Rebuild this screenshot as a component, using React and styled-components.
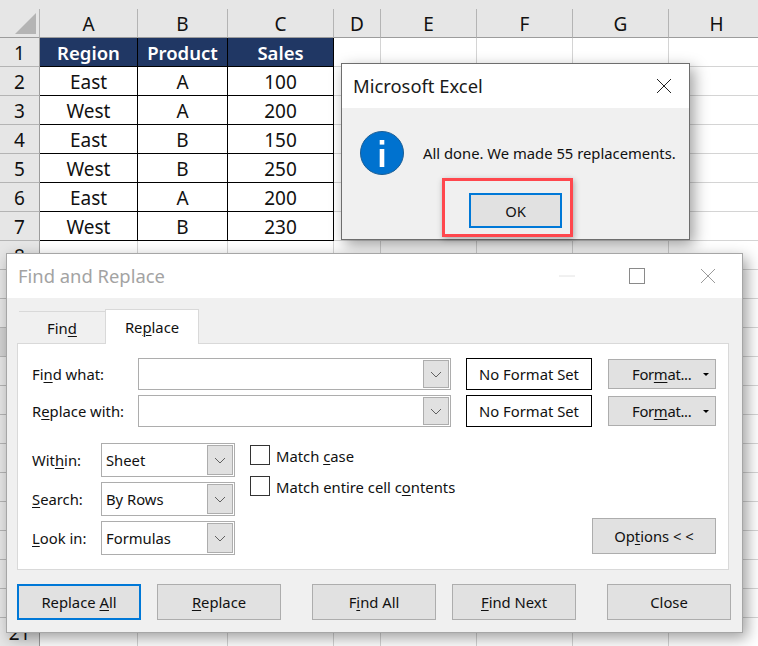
import React from 'react';
import styled, { createGlobalStyle } from 'styled-components';

const Global = createGlobalStyle`
  * { box-sizing: border-box; }
  html, body { margin: 0; padding: 0; background: #fff; }
  body { width: 758px; height: 646px; overflow: hidden; font-family: "Noto Sans", "Open Sans", sans-serif; color: #111; }
`;

const Page = styled.div`position: relative; width: 758px; height: 646px; overflow: hidden;`;

const Sheet = styled.div`
  display: grid;
  grid-template-columns: 40px 98px 90px 106px 47px 96px 96px 96px 96px;
  grid-auto-rows: 29px;
  padding-top: 9px;
  background: linear-gradient(#e6e6e6 9px, #fff 9px);
  font-size: 19px;
`;
const Corner = styled.div`
  background: #e6e6e6;
  border-right: 1px solid #b4b4b4;
  border-bottom: 1px solid #9c9c9c;
  svg { display: block; margin: 4px 0 0 15px; }
`;
const ColHead = styled.div`
  display: flex; align-items: center; justify-content: center;
  padding-top: 2px;
  background: #e6e6e6;
  border-right: 1px solid #b4b4b4;
  border-bottom: 1px solid #9c9c9c;
`;
const RowHead = styled.div`
  display: flex; align-items: center; justify-content: center;
  padding-top: 2px;
  background: ${p => (p.$active ? '#d2d2d2' : '#e6e6e6')};
  border-right: 1px solid #9c9c9c;
  border-bottom: 1px solid #b4b4b4;
`;
const Cell = styled.div`
  display: flex; align-items: center; justify-content: center;
  padding-top: ${p => (p.$head ? 0 : 2)}px;
  background: ${p => (p.$head ? '#203764' : '#fff')};
  color: ${p => (p.$head ? '#fff' : '#111')};
  font-weight: ${p => (p.$head ? 600 : 400)};
  font-size: ${p => (p.$head ? 18.5 : 19)}px;
  border-right: 1px solid ${p => (p.$table ? '#000' : '#d4d4d4')};
  border-bottom: 1px solid ${p => (p.$table ? '#000' : '#d4d4d4')};
`;

const Window = styled.section`
  position: absolute;
  left: ${p => p.$x}px; top: ${p => p.$y}px;
  width: ${p => p.$w}px; height: ${p => p.$h}px;
  display: flex; flex-direction: column;
  background: #f0f0f0;
  border: 1px solid ${p => p.$edge};
  box-shadow: 4px 5px 14px rgba(0,0,0,.38);
`;
const TitleBar = styled.header`
  flex: none; height: 44px;
  display: flex; align-items: center;
  background: #fff;
  padding-left: 11px;
  font-size: 18.4px;
  color: ${p => (p.$dim ? '#a3a3a3' : '#1a1a1a')};
`;
const TitleText = styled.span`flex: 1; padding-bottom: 2px;`;
const Ctrl = styled.svg`display: block; flex: none; margin-right: ${p => p.$mr}px;`;

const MsgBody = styled.div`display: flex; flex-direction: column; padding: 23px 0 0 18px;`;
const MsgRow = styled.div`display: flex; align-items: center; gap: 19px; font-size: 14.8px; height: 44px;`;
const Highlight = styled.div`
  align-self: flex-start;
  margin: 3px 0 0 82px;
  padding: 12px 8px 6px 24px;
  border: 3px solid #ff474d;
  box-shadow: 1px 2px 6px rgba(0,0,0,.3);
`;
const Btn = styled.div`
  display: flex; align-items: center; justify-content: center;
  flex: none;
  width: ${p => p.$w || 124}px; height: ${p => p.$h || 36}px;
  background: #e1e1e1;
  border: ${p => (p.$focus ? '2px solid #0078d7' : '1px solid #adadad')};
  font-size: 14.8px;
  color: #111;
`;
const U = styled.span`text-decoration: underline; text-underline-offset: 2px; text-decoration-thickness: 1px;`;

const FindBody = styled.div`display: flex; flex-direction: column; padding: 0 11px 0 10px;`;
const Tabs = styled.div`display: flex; align-items: flex-end; height: 45px; padding: 0 0 0 2px; font-size: 14.8px;`;
const Tab = styled.div`
  display: flex; align-items: center; justify-content: center;
  width: ${p => p.$w}px;
  height: ${p => (p.$on ? 35 : 32)}px;
  margin-bottom: ${p => (p.$on ? -1 : 0)}px;
  background: ${p => (p.$on ? '#fff' : 'transparent')};
  border: 1px solid #d9d9d9;
  border-width: ${p => (p.$on ? '1px 1px 0 1px' : '1px 0 0 0')};
  position: relative; z-index: 1;
`;
const Panel = styled.div`
  height: 227px; margin-right: 2px;
  display: flex; flex-direction: column;
  background: #fff;
  border: 1px solid #d9d9d9;
  padding: 14px 12px 0 14px;
  font-size: 14.8px;
`;
const FindRows = styled.div`display: flex; flex-direction: column; gap: 5px;`;
const FindRow = styled.div`display: flex; align-items: center; height: 32px;`;
const RowLabel = styled.label`width: ${p => p.$w}px; flex: none;`;
const Combo = styled.div`
  flex: none;
  width: ${p => p.$w}px; height: ${p => p.$h}px;
  display: flex; align-items: center; justify-content: space-between;
  border: 1px solid #adadad;
  padding: 1px;
  background: #fff;
`;
const ComboText = styled.span`padding-left: 3px;`;
const Arrow = styled.span`
  flex: none; width: 26px; height: 100%;
  display: flex; align-items: center; justify-content: center;
  background: #e1e1e1; border: 1px solid #adadad;
`;
const NoFormat = styled.div`
  flex: none; width: 126px; height: 32px; margin-left: 15px;
  display: flex; align-items: center; justify-content: center;
  border: 1px solid #000;
`;
const FormatBtn = styled.div`
  flex: none; width: 108px; height: 30px; margin-left: 16px;
  position: relative;
  display: flex; align-items: center;
  padding-left: 23px;
  letter-spacing: -0.3px;
  background: #e1e1e1; border: 1px solid #adadad;
`;
const Caret = styled.i`
  position: absolute; right: 6px; top: 13px;
  border-left: 3px solid transparent; border-right: 3px solid transparent; border-top: 3px solid #000;
`;
const Lower = styled.div`display: flex; margin-top: 16px; flex: 1;`;
const Selects = styled.div`display: flex; flex-direction: column; gap: 5px;`;
const SelectRow = styled.div`display: flex; align-items: center;`;
const Checks = styled.div`display: flex; flex-direction: column; gap: 11px; margin: 2px 0 0 15px;`;
const CheckRow = styled.label`display: flex; align-items: center; gap: 6px; height: 20px;`;
const CheckText = styled.span`position: relative; top: 1px;`;
const Box = styled.span`flex: none; width: 20px; height: 20px; border: 1px solid #333; background: #fff;`;
const OptionsWrap = styled.div`margin-left: auto; padding-top: 75px;`;
const Footer = styled.footer`display: flex; gap: 31px; margin-top: 14px;`;
const Group = styled.div`display: flex; gap: 16px;`;

const Chevron = () => (
  <svg width="12" height="7" viewBox="0 0 12 7"><polyline points="1,1 6,6 11,1" fill="none" stroke="#606060" strokeWidth="1" /></svg>
);

const cols = ['A', 'B', 'C', 'D', 'E', 'F', 'G', 'H'];
const table = [
  ['Region', 'Product', 'Sales'],
  ['East', 'A', '100'],
  ['West', 'A', '200'],
  ['East', 'B', '150'],
  ['West', 'B', '250'],
  ['East', 'A', '200'],
  ['West', 'B', '230'],
];
const rowNums = Array.from({ length: 21 }, (_, i) => i + 1);
const isCovered = n => n > 8 && n < 21;

export default function App() {
  return (
    <Page>
      <Global />
      <Sheet>
        <Corner>
          <svg width="21" height="21" viewBox="0 0 21 21"><polygon points="21,0 21,21 0,21" fill="#b4b4b4" /></svg>
        </Corner>
        {cols.map(c => <ColHead key={c}>{c}</ColHead>)}
        {rowNums.map(n => (
          <React.Fragment key={n}>
            <RowHead $active={n === 11}>{isCovered(n) ? '' : n}</RowHead>
            {cols.map((c, i) => {
              const row = table[n - 1];
              const inTable = row && i < 3;
              return (
                <Cell key={c} $table={inTable} $head={inTable && n === 1}>
                  {inTable ? row[i] : ''}
                </Cell>
              );
            })}
          </React.Fragment>
        ))}
      </Sheet>

      <Window $x={341} $y={63} $w={349} $h={177} $edge="#6e6e6e">
        <TitleBar>
          <TitleText>Microsoft Excel</TitleText>
          <Ctrl $mr={17} width="16" height="16" viewBox="0 0 16 16"><path d="M1 1L15 15M15 1L1 15" stroke="#222" strokeWidth="1" fill="none" /></Ctrl>
        </TitleBar>
        <MsgBody>
          <MsgRow>
            <svg width="44" height="44" viewBox="0 0 44 44">
              <circle cx="22" cy="22" r="21.5" fill="#0072cf" stroke="#1b5e96" strokeWidth="1" />
              <rect x="19.7" y="18" width="4.6" height="18" fill="#fff" />
              <rect x="19.7" y="9" width="4.6" height="4.6" fill="#fff" />
            </svg>
            <span>All done. We made 55 replacements.</span>
          </MsgRow>
          <Highlight>
            <Btn $w={93} $h={35} $focus>OK</Btn>
          </Highlight>
        </MsgBody>
      </Window>

      <Window $x={6} $y={253} $w={737} $h={380} $edge="#a6a6a6">
        <TitleBar $dim>
          <TitleText>Find and Replace</TitleText>
          <Ctrl $mr={54} width="16" height="2" viewBox="0 0 16 2"><path d="M0 1H16" stroke="#e2e2e2" /></Ctrl>
          <Ctrl $mr={55} width="16" height="16" viewBox="0 0 16 16"><rect x=".5" y=".5" width="15" height="15" fill="none" stroke="#8a8a8a" /></Ctrl>
          <Ctrl $mr={26} width="16" height="16" viewBox="0 0 16 16"><path d="M1 1L15 15M15 1L1 15" stroke="#9a9a9a" fill="none" /></Ctrl>
        </TitleBar>
        <FindBody>
          <Tabs>
            <Tab $w={86}><span>Fin<U>d</U></span></Tab>
            <Tab $w={94} $on><span>Re<U>p</U>lace</span></Tab>
          </Tabs>
          <Panel>
            <FindRows>
              <FindRow>
                <RowLabel $w={106}>Fi<U>n</U>d what:</RowLabel>
                <Combo $w={313} $h={32}><span /><Arrow><Chevron /></Arrow></Combo>
                <NoFormat>No Format Set</NoFormat>
                <FormatBtn><span>For<U>m</U>at...</span><Caret /></FormatBtn>
              </FindRow>
              <FindRow>
                <RowLabel $w={106}>R<U>e</U>place with:</RowLabel>
                <Combo $w={313} $h={32}><span /><Arrow><Chevron /></Arrow></Combo>
                <NoFormat>No Format Set</NoFormat>
                <FormatBtn><span>For<U>m</U>at...</span><Caret /></FormatBtn>
              </FindRow>
            </FindRows>
            <Lower>
              <Selects>
                <SelectRow>
                  <RowLabel $w={69}>Wit<U>h</U>in:</RowLabel>
                  <Combo $w={134} $h={34}><ComboText>Sheet</ComboText><Arrow><Chevron /></Arrow></Combo>
                </SelectRow>
                <SelectRow>
                  <RowLabel $w={69}><U>S</U>earch:</RowLabel>
                  <Combo $w={134} $h={34}><ComboText>By Rows</ComboText><Arrow><Chevron /></Arrow></Combo>
                </SelectRow>
                <SelectRow>
                  <RowLabel $w={69}><U>L</U>ook in:</RowLabel>
                  <Combo $w={134} $h={34}><ComboText>Formulas</ComboText><Arrow><Chevron /></Arrow></Combo>
                </SelectRow>
              </Selects>
              <Checks>
                <CheckRow><Box /><CheckText>Match <U>c</U>ase</CheckText></CheckRow>
                <CheckRow><Box /><CheckText>Match entire cell c<U>o</U>ntents</CheckText></CheckRow>
              </Checks>
              <OptionsWrap>
                <Btn><span>Op<U>t</U>ions &lt; &lt;</span></Btn>
              </OptionsWrap>
            </Lower>
          </Panel>
          <Footer>
            <Group>
              <Btn $focus><span>Replace <U>A</U>ll</span></Btn>
              <Btn><span><U>R</U>eplace</span></Btn>
            </Group>
            <Group>
              <Btn><span>F<U>i</U>nd All</span></Btn>
              <Btn><span><U>F</U>ind Next</span></Btn>
            </Group>
            <Btn>Close</Btn>
          </Footer>
        </FindBody>
      </Window>
    </Page>
  );
}
